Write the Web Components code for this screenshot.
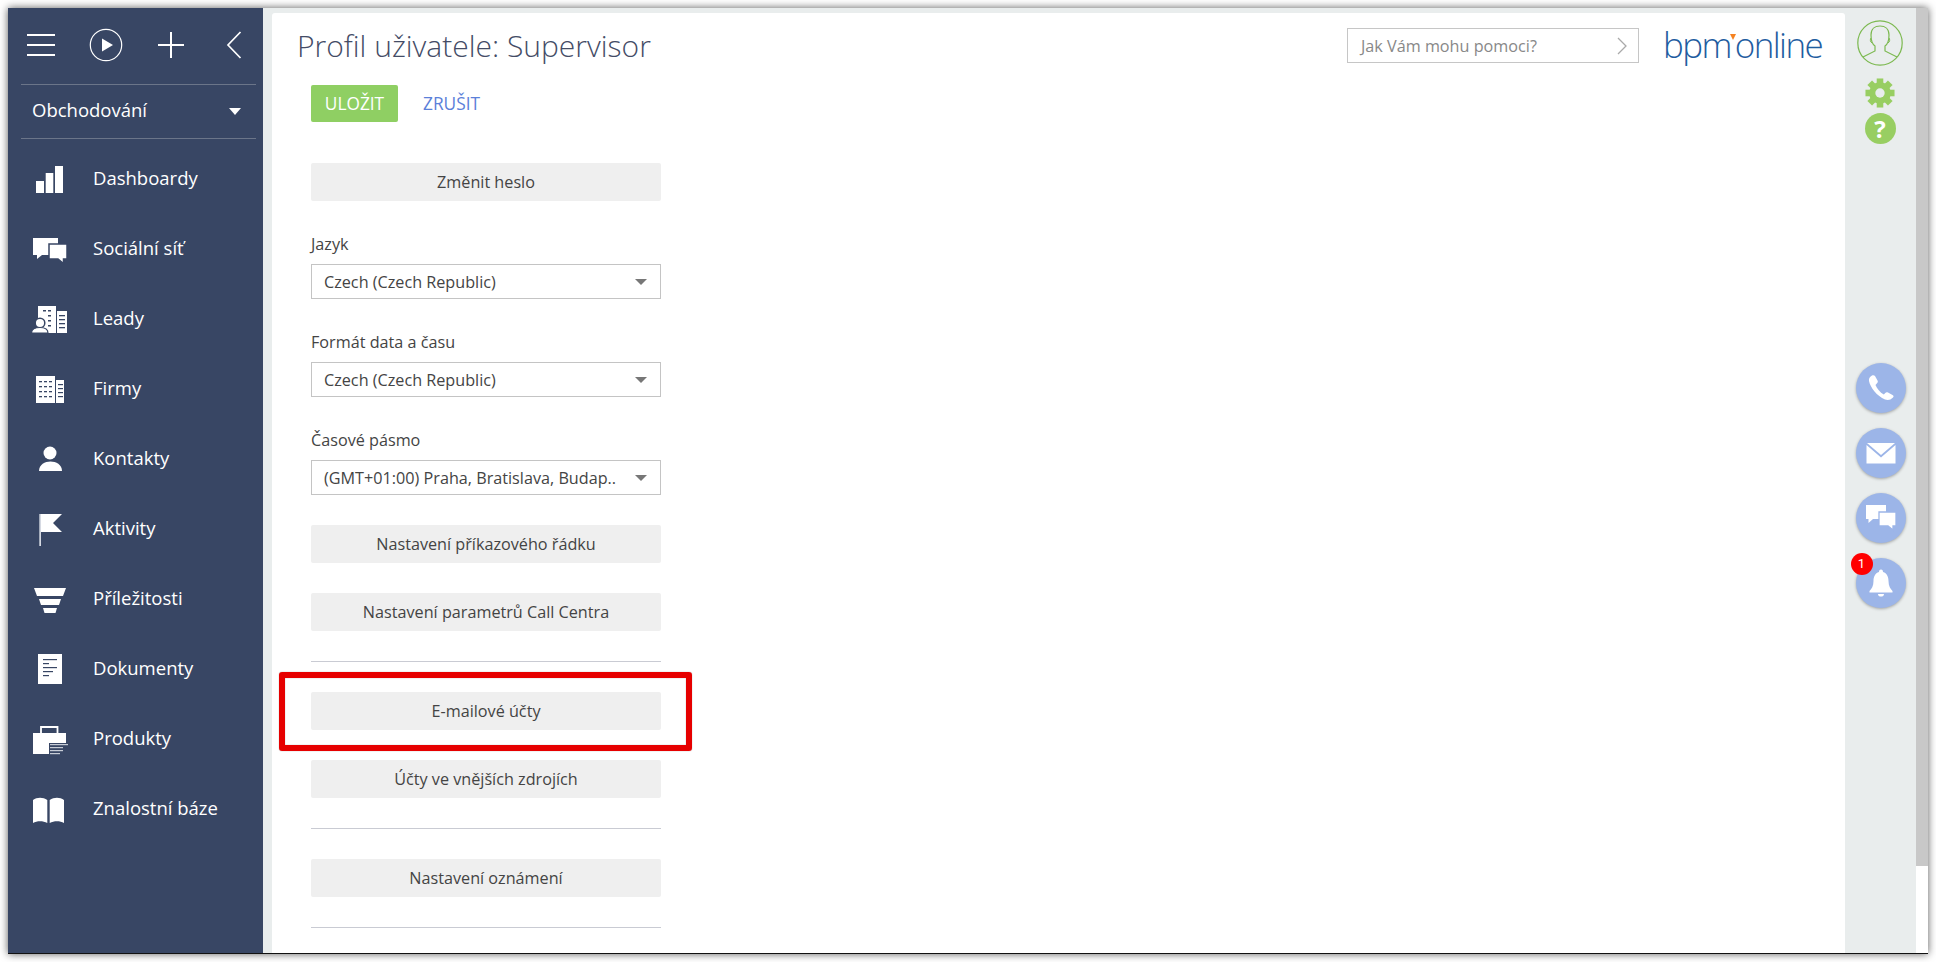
<!DOCTYPE html>
<html lang="cs">
<head>
<meta charset="UTF-8">
<title>Profil uživatele</title>
<style>
  html, body { margin: 0; height: 100%; background: #fff; overflow: hidden; }
  body { padding: 8px 8px 0; box-sizing: border-box; font-family: "Open Sans", "Liberation Sans", sans-serif; color: #444; }
</style>
</head>
<body>

<template id="tpl-app-window">
  <style>
    :host { display: flex; height: 945px; width: 1920px; background: #e9eded; box-shadow: 0 0 8px rgba(0,0,0,.65); border-bottom: 1px solid #111; box-sizing: content-box; }
    main { flex: 1; min-width: 0; margin: 5px 0 0 9px; background: #fff; border-radius: 3px 3px 0 0; position: relative; }
  </style>
  <slot name="nav"></slot>
  <main><slot></slot></main>
  <slot name="rail"></slot>
</template>

<template id="tpl-side-nav">
  <style>
    :host { display: block; width: 255px; flex: none; background: #384664; color: #fff; }
    .tools { height: 76px; display: flex; align-items: center; padding-left: 19px; padding-bottom: 3px; box-sizing: border-box; }
    .tools svg { display: block; flex: none; }
    .rule { height: 1px; margin-left: 13px; width: 235px; background: #6b7589; }
    .pick { height: 53px; box-sizing: border-box; padding: 0 0 5px 24px; display: flex; align-items: center; font-size: 18.5px; position: relative; }
    .pick i { position: absolute; left: 221px; top: 23px; width: 0; height: 0; border: 6.5px solid transparent; border-top: 7px solid #fff; border-bottom: 0; }
    nav { margin-top: 5px; }
  </style>
  <div class="tools">
    <svg width="28" height="24" viewBox="0 0 28 24" fill="#fff"><rect y="1" width="28" height="2"/><rect y="11" width="28" height="2"/><rect y="21" width="28" height="2"/></svg>
    <svg style="margin-left:34px" width="34" height="34" viewBox="0 0 34 34"><circle cx="17" cy="17" r="15.7" fill="none" stroke="#fff" stroke-width="1.2"/><path d="M13 10.5 L24 17 L13 23.5 Z" fill="#fff"/></svg>
    <svg style="margin-left:35px" width="26" height="26" viewBox="0 0 26 26" fill="#fff"><rect x="12" width="2" height="26"/><rect y="12" width="26" height="2"/></svg>
    <svg style="margin-left:42px" width="16" height="28" viewBox="0 0 16 28"><path d="M14.5 1 L2 14 L14.5 27" fill="none" stroke="#fff" stroke-width="1.7"/></svg>
  </div>
  <div class="rule"></div>
  <div class="pick"><slot name="section"></slot><i></i></div>
  <div class="rule"></div>
  <nav><slot></slot></nav>
</template>

<template id="tpl-nav-item">
  <style>
    :host { display: flex; align-items: center; height: 70px; font-size: 18.5px; }
    .ico { width: 40px; height: 40px; margin-left: 21px; margin-right: 24px; flex: none; }
    span { padding-bottom: 4px; }
    ::slotted(svg) { display: block; }
  </style>
  <div class="ico"><slot name="icon"></slot></div>
  <span><slot></slot></span>
</template>

<template id="tpl-page-head">
  <style>
    :host { display: flex; height: 72px; box-sizing: border-box; padding-left: 25px; }
    h1 { margin: 0; font-weight: 300; font-size: 30px; line-height: 42px; margin-top: 12px; color: #444c66; white-space: nowrap; }
    .search { margin-left: auto; margin-top: 15px; width: 292px; height: 35px; box-sizing: border-box; border: 1px solid #c6c6c6; display: flex; align-items: center; padding: 0 11px 0 13px; font-size: 16.2px; color: #888; justify-content: space-between; }
    .logo { width: 159px; margin: 11px 23px 0 24px; height: 42px; font-weight: 300; font-size: 35px; line-height: 42px; letter-spacing: -1.6px; color: #1f5d9f; white-space: nowrap; display: flex; }
    .logo i { display: inline-block; width: 0; height: 0; border: 3.5px solid transparent; border-top: 6px solid #f58220; border-bottom: 0; margin: 10px -1px 0 -1px; }
  </style>
  <h1><slot></slot></h1>
  <div class="search"><span>Jak Vám mohu pomoci?</span>
    <svg width="10" height="18" viewBox="0 0 10 18"><path d="M1 1 L9 9 L1 17" fill="none" stroke="#aaa" stroke-width="1.3"/></svg></div>
  <div class="logo"><span>bpm</span><i></i><span>online</span></div>
</template>

<template id="tpl-action-bar">
  <style>
    :host { display: flex; align-items: center; height: 37px; padding-left: 39px; }
    .save { width: 87px; height: 37px; background: #8fcf63; color: #fff; border-radius: 2px; display: flex; align-items: center; justify-content: center; font-size: 17.3px; }
    .cancel { margin-left: 25px; color: #5b80d9; font-size: 17.3px; }
  </style>
  <div class="save">ULOŽIT</div>
  <div class="cancel">ZRUŠIT</div>
</template>

<template id="tpl-form-col">
  <style>
    :host { display: flex; flex-direction: column; gap: 30px; width: 350px; margin: 41px 0 0 39px; }
  </style>
  <slot></slot>
</template>

<template id="tpl-form-button">
  <style>
    :host { display: flex; height: 38px; box-sizing: border-box; padding-bottom: 1px; align-items: center; justify-content: center; background: #efefef; border-radius: 2px; font-size: 16.2px; color: #444; }
  </style>
  <slot></slot>
</template>

<template id="tpl-form-select">
  <style>
    :host { display: block; margin-top: 2px; font-size: 16.2px; color: #444; }
    label { display: block; line-height: 22px; margin-bottom: 9px; }
    .box { height: 35px; box-sizing: border-box; border: 1px solid #c4c4c4; display: flex; align-items: center; padding: 0 0 0 12px; position: relative; }
    i { position: absolute; right: 13px; top: 14px; width: 0; height: 0; border: 6px solid transparent; border-top: 6px solid #777; border-bottom: 0; }
  </style>
  <label></label>
  <div class="box"><span><slot></slot></span><i></i></div>
</template>

<template id="tpl-form-rule">
  <style>:host { display: block; height: 1px; background: #c9cbd3; }</style>
</template>

<template id="tpl-mark-box">
  <style>
    :host { position: absolute; left: 7px; top: 659px; width: 413px; height: 79px; box-sizing: border-box; border: 6px solid #e60000; border-radius: 3px; box-shadow: 0 0 1px rgba(0,0,0,.5), inset 0 0 1px rgba(0,0,0,.5); }
  </style>
</template>

<template id="tpl-action-rail">
  <style>
    :host { display: flex; flex: none; width: 83px; background: #fff; }
    .rail { width: 71px; display: flex; flex-direction: column; align-items: center; padding-top: 12px; box-sizing: border-box; background: #e9eded; }
    .rail svg { display: block; flex: none; }
    .top { display: flex; flex-direction: column; align-items: center; margin-left: -1px; }
    .round { margin-top: 219px; display: flex; flex-direction: column; gap: 15px; }
    .thumb { width: 12px; height: 858px; background: #c8c8c8; }
    .help { margin-top: 5px; width: 31px; height: 31px; border-radius: 50%; background: #98ce62; color: #fff; font-weight: 700; font-size: 24px; line-height: 31px; text-align: center; }
  </style>
  <div class="rail">
    <div class="top">
      <svg width="46" height="46" viewBox="0 0 46 46" fill="none" stroke="#7cb950" stroke-width="1.2"><circle cx="23" cy="23" r="22.2"/><path d="M6 37 L18 31 V26 C15 24 14 19 14 15 C14 9 18 6 23 6 C28 6 32 9 32 15 C32 19 31 24 28 26 V31 L40 37"/><path d="M14 18 C13 19 13 22 15 23 M32 18 C33 19 33 22 31 23" stroke-width="1"/></svg>
      <svg style="margin-top:12px" width="32" height="30" viewBox="0 0 32 32" fill="#98ce62">
        <circle cx="16" cy="16" r="11.5"/>
        <g><rect x="12.5" y="0.5" width="7" height="31"/><rect x="0.5" y="12.5" width="31" height="7"/>
        <rect x="12.5" y="0.5" width="7" height="31" transform="rotate(45 16 16)"/><rect x="12.5" y="0.5" width="7" height="31" transform="rotate(-45 16 16)"/></g>
        <circle cx="16" cy="16" r="5" fill="#e9eded"/>
      </svg>
      <div class="help">?</div>
    </div>
    <div class="round"><slot></slot></div>
  </div>
  <div class="thumb"></div>
</template>

<template id="tpl-round-button">
  <style>
    :host { display: flex; align-items: center; justify-content: center; position: relative; width: 50px; height: 50px; border-radius: 50%; background: #9cb5e8; box-shadow: 0 1px 3px rgba(0,0,0,.3); }
    ::slotted(svg) { display: block; }
    b { display: none; position: absolute; left: -5px; top: -5px; width: 22px; height: 22px; border-radius: 50%; background: #f00; color: #fff; font: 400 13px/22px Roboto, sans-serif; text-align: center; }
    :host([count]) b { display: block; }
  </style>
  <slot></slot><b></b>
</template>

<app-window>
  <side-nav slot="nav">
    <span slot="section">Obchodování</span>
    <nav-item><svg slot="icon" width="40" height="40" viewBox="0 0 40 40" fill="#fff"><rect x="7" y="22" width="8" height="12"/><rect x="16.7" y="14" width="7.6" height="20"/><rect x="26" y="7" width="8" height="27"/></svg>Dashboardy</nav-item>
    <nav-item><svg slot="icon" width="40" height="40" viewBox="0 0 40 40"><path d="M4 9 H29 V26 H13 L8 30 V26 H4 Z" fill="#fff"/><path d="M20 15 H38 V30 H34.5 V34.5 L29 30 H20 Z" fill="#fff" stroke="#384664" stroke-width="1.5"/></svg>Sociální síť</nav-item>
    <nav-item><svg slot="icon" width="40" height="40" viewBox="0 0 40 40" fill="#fff"><rect x="9" y="7" width="18" height="27"/><rect x="28" y="12" width="10" height="22"/><g fill="#384664"><rect x="14" y="11" width="3" height="1.5"/><rect x="19" y="11" width="3" height="1.5"/><rect x="19" y="16" width="3" height="1.5"/><rect x="19" y="21" width="3" height="1.5"/><rect x="19" y="26" width="3" height="1.5"/><rect x="30" y="16" width="6" height="1.3"/><rect x="30" y="20" width="6" height="1.3"/><rect x="30" y="24" width="6" height="1.3"/><rect x="30" y="28" width="6" height="1.3"/></g><circle cx="11" cy="24" r="4.8" stroke="#384664" stroke-width="1.5"/><path d="M2.5 34 C2.5 30 7 28.5 11 28.5 C15 28.5 19 30 19 34 Z" stroke="#384664" stroke-width="1.2"/></svg>Leady</nav-item>
    <nav-item><svg slot="icon" width="40" height="40" viewBox="0 0 40 40" fill="#fff"><rect x="7" y="7" width="19" height="27"/><rect x="27" y="11" width="8" height="23"/><g fill="#384664"><rect x="10" y="12" width="3" height="1.3"/><rect x="15" y="12" width="3" height="1.3"/><rect x="20" y="12" width="3" height="1.3"/><rect x="10" y="17" width="3" height="1.3"/><rect x="15" y="17" width="3" height="1.3"/><rect x="20" y="17" width="3" height="1.3"/><rect x="10" y="22" width="3" height="1.3"/><rect x="15" y="22" width="3" height="1.3"/><rect x="20" y="22" width="3" height="1.3"/><rect x="10" y="27" width="3" height="1.3"/><rect x="15" y="27" width="3" height="1.3"/><rect x="20" y="27" width="3" height="1.3"/><rect x="29" y="15" width="5" height="1.2"/><rect x="29" y="19" width="5" height="1.2"/><rect x="29" y="23" width="5" height="1.2"/><rect x="29" y="27" width="5" height="1.2"/></g></svg>Firmy</nav-item>
    <nav-item><svg slot="icon" width="40" height="40" viewBox="0 0 40 40" fill="#fff"><circle cx="21" cy="14" r="6.5"/><path d="M10 32 C10 25.5 16 22.5 21.5 22.5 C27 22.5 33 25.5 33 32 Z"/></svg>Kontakty</nav-item>
    <nav-item><svg slot="icon" width="40" height="40" viewBox="0 0 40 40" fill="#fff"><rect x="10.3" y="5" width="1.7" height="32" fill="#d5d9e2"/><path d="M12 5 H33 L24 14 L33 23 H12 Z"/></svg>Aktivity</nav-item>
    <nav-item><svg slot="icon" width="40" height="40" viewBox="0 0 40 40" fill="#fff"><path d="M5 9 H37 L34 17 H8 Z"/><path d="M10 20 H32 L30 26 H12 Z"/><path d="M14 29 H28 L26.5 34 H15.5 Z"/></svg>Příležitosti</nav-item>
    <nav-item><svg slot="icon" width="40" height="40" viewBox="0 0 40 40"><rect x="9" y="5" width="24" height="30" fill="#fff"/><g fill="#384664"><rect x="14" y="10" width="14" height="1.2"/><rect x="14" y="14" width="6" height="1.2"/><rect x="14" y="18" width="14" height="1.2"/><rect x="14" y="22" width="10" height="1.2"/><rect x="14" y="26" width="6" height="1.2"/></g></svg>Dokumenty</nav-item>
    <nav-item><svg slot="icon" width="40" height="40" viewBox="0 0 40 40"><path d="M12 14 V8 H28.5 V14" fill="none" stroke="#fff" stroke-width="1.8"/><rect x="4" y="14" width="33" height="21" fill="#fff"/><rect x="20" y="24" width="20" height="12" fill="#384664"/><g fill="#c7ccd6"><rect x="21" y="25" width="18" height="1.2"/><rect x="21" y="28" width="13" height="1.2"/><rect x="21" y="31" width="13" height="1.2"/><rect x="21" y="34" width="10" height="1.2"/></g></svg>Produkty</nav-item>
    <nav-item><svg slot="icon" width="40" height="40" viewBox="0 0 40 40" fill="#fff"><path d="M4 11 C8 8 14 8 18.3 11 V34 C14 31.5 8 31.5 4 34 Z"/><path d="M35 11 C31 8 25 8 20.7 11 V34 C25 31.5 31 31.5 35 34 Z"/></svg>Znalostní báze</nav-item>
  </side-nav>

  <page-head>Profil uživatele: Supervisor</page-head>
  <action-bar></action-bar>
  <form-col>
    <form-button>Změnit heslo</form-button>
    <form-select label="Jazyk">Czech (Czech Republic)</form-select>
    <form-select label="Formát data a času">Czech (Czech Republic)</form-select>
    <form-select label="Časové pásmo">(GMT+01:00) Praha, Bratislava, Budap..</form-select>
    <form-button>Nastavení příkazového řádku</form-button>
    <form-button>Nastavení parametrů Call Centra</form-button>
    <form-rule></form-rule>
    <form-button>E-mailové účty</form-button>
    <form-button>Účty ve vnějších zdrojích</form-button>
    <form-rule></form-rule>
    <form-button>Nastavení oznámení</form-button>
    <form-rule></form-rule>
  </form-col>
  <mark-box></mark-box>

  <action-rail slot="rail">
    <round-button><svg width="30" height="30" viewBox="0 0 30 30"><path d="M6 2.5 C4 3.5 2.5 5.5 3 8 C4.5 15 11 23 19 26.5 C22 27.5 24.5 27 27 24.5 C28 23.5 27.5 22.5 26.5 22 L22 19.5 C21 19 20 19 19.3 20 L17.8 21.5 C14 19.5 11 15.5 9.5 12 L11 10.3 C12 9.3 12 8.5 11.5 7.5 L9 3 C8.2 2 7 2 6 2.5 Z" fill="#fff"/></svg></round-button>
    <round-button><svg width="30" height="22" viewBox="0 0 30 22"><path d="M1 1 H29 L15 13 Z" fill="#fff"/><path d="M0.5 3 L15 15.5 L29.5 3 V21.5 H0.5 Z" fill="#fff"/></svg></round-button>
    <round-button><svg width="32" height="28" viewBox="0 0 32 28"><path d="M1 1 H21 V15 H8 L3.5 19 V15 H1 Z" fill="#fff"/><path d="M14 8 H31 V22 H28 V26 L23 22 H14 Z" fill="#fff" stroke="#9cb5e8" stroke-width="1.3"/></svg></round-button>
    <round-button count="1"><svg width="24" height="28" viewBox="0 0 24 28" fill="#fff"><path d="M12 0.5 C13.5 0.5 14 1.5 14 3 C18 4 19.5 8 19.5 12 C19.5 17 21.5 20 23.5 22 V23.5 H0.5 V22 C2.5 20 4.5 17 4.5 12 C4.5 8 6 4 10 3 C10 1.5 10.5 0.5 12 0.5 Z"/><path d="M9 25 H15 C15 27 13.5 27.5 12 27.5 C10.5 27.5 9 27 9 25 Z"/></svg></round-button>
  </action-rail>
</app-window>

<script>
  // all elements take their shadow from a template named tpl-<tag>
  function shadowFrom(id, host) {
    const root = host.attachShadow({ mode: 'open' });
    root.append(document.getElementById(id).content.cloneNode(true));
    return root;
  }

  class Plain extends HTMLElement {
    connectedCallback() {
      if (!this.shadowRoot) shadowFrom('tpl-' + this.localName, this);
    }
  }

  ['app-window', 'side-nav', 'nav-item', 'page-head', 'action-bar', 'form-col',
   'form-button', 'form-rule', 'mark-box', 'action-rail'].forEach(tag => {
    customElements.define(tag, class extends Plain {});
  });

  class FormSelect extends HTMLElement {
    connectedCallback() {
      const root = shadowFrom('tpl-form-select', this);
      root.querySelector('label').textContent = this.getAttribute('label');
    }
  }
  customElements.define('form-select', FormSelect);

  class RoundButton extends HTMLElement {
    connectedCallback() {
      const root = shadowFrom('tpl-round-button', this);
      if (this.hasAttribute('count')) root.querySelector('b').textContent = this.getAttribute('count');
    }
  }
  customElements.define('round-button', RoundButton);
</script>
</body>
</html>
